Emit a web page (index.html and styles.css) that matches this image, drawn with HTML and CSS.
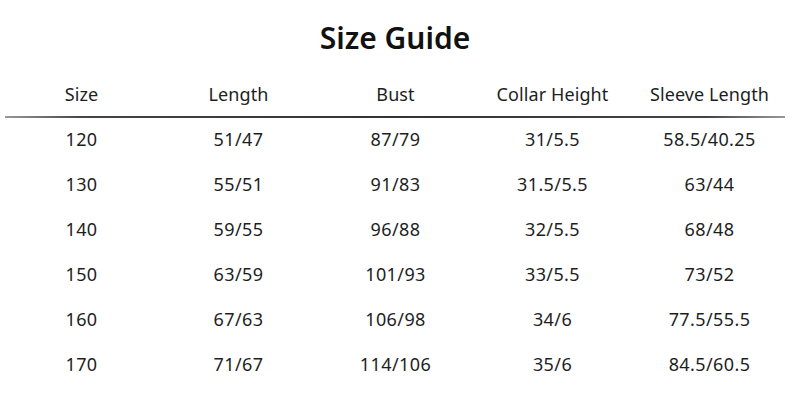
FILE: index.html
```html
<!DOCTYPE html>
<html>
<head>
<meta charset="utf-8">
<link rel="stylesheet" href="styles.css">
</head>
<body>
<div class="page">
  <h1 class="title">Size Guide</h1>
  <div class="table">
    <div class="row head">
      <div>Size</div><div>Length</div><div>Bust</div><div>Collar Height</div><div>Sleeve Length</div>
    </div>
    <div class="rule"></div>
    <div class="row"><div>120</div><div>51/47</div><div>87/79</div><div>31/5.5</div><div>58.5/40.25</div></div>
    <div class="row"><div>130</div><div>55/51</div><div>91/83</div><div>31.5/5.5</div><div>63/44</div></div>
    <div class="row"><div>140</div><div>59/55</div><div>96/88</div><div>32/5.5</div><div>68/48</div></div>
    <div class="row"><div>150</div><div>63/59</div><div>101/93</div><div>33/5.5</div><div>73/52</div></div>
    <div class="row"><div>160</div><div>67/63</div><div>106/98</div><div>34/6</div><div>77.5/55.5</div></div>
    <div class="row"><div>170</div><div>71/67</div><div>114/106</div><div>35/6</div><div>84.5/60.5</div></div>
  </div>
</div>
</body>
</html>
```
FILE: styles.css
```css
html, body {
  margin: 0;
  padding: 0;
  background: #fff;
}
.page {
  width: 790px;
  height: 400px;
  font-family: "Noto Sans", "Open Sans", sans-serif;
  color: #1e1e1e;
  overflow: hidden;
}
.title {
  margin: 0;
  padding-top: 15px;
  height: 51px;
  line-height: 45px;
  text-align: center;
  font-size: 30px;
  font-weight: 600;
  color: #111;
}
.table {
  padding-left: 3px;
  padding-top: 9px;
}
.row {
  display: grid;
  grid-template-columns: repeat(5, 157px);
  height: 45px;
  line-height: 42px;
  font-size: 18px;
  letter-spacing: 0.4px;
  text-align: center;
}
.head {
  height: 41px;
  line-height: 39px;
  letter-spacing: 0.1px;
}
.rule {
  margin-left: 2px;
  width: 780px;
  height: 2px;
  background: linear-gradient(to right, #999 0%, #444 10%, #333 50%, #444 90%, #999 100%);
}
```
